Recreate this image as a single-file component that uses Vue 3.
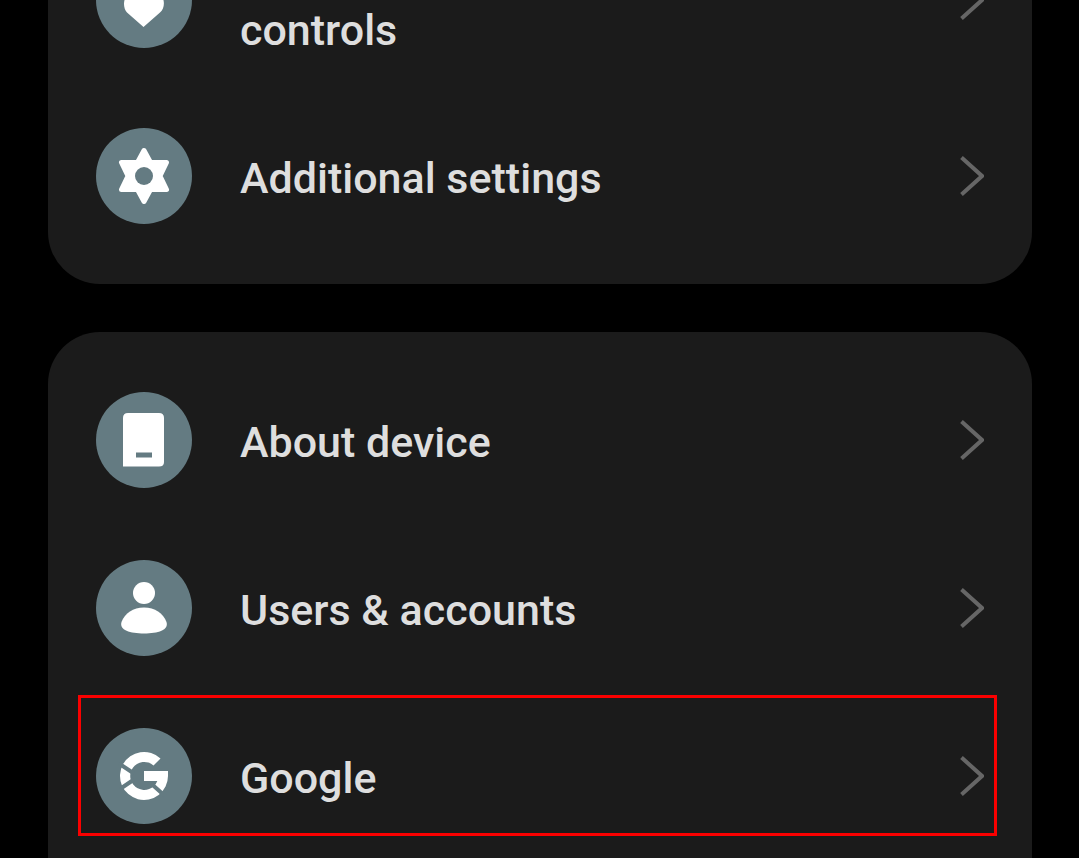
<script setup>
const groups = [
  [
    { label: 'controls', icon: 'heart', continued: true },
    { label: 'Additional settings', icon: 'gear' },
  ],
  [
    { label: 'About device', icon: 'device' },
    { label: 'Users & accounts', icon: 'user' },
    { label: 'Google', icon: 'google', marked: true },
  ],
]
</script>

<template>
  <main class="settings">
    <nav v-for="(group, i) in groups" :key="i" class="card">
      <a
        v-for="item in group"
        :key="item.label"
        href="#"
        class="row"
        :class="{ continued: item.continued, marked: item.marked }"
      >
        <svg class="icon" viewBox="0 0 96 96" aria-hidden="true">
          <circle class="disc" cx="48" cy="48" r="48" />
          <path
            v-if="item.icon === 'heart'"
            class="glyph"
            d="M47.500 75 L31 60.500 C27 56 27 48 31 43 C36 37 44 38 48 43 C52 38 60 37 65 43 C69 48 69 56 64 60.500 Z"
          />
          <template v-else-if="item.icon === 'gear'">
            <path
              class="glyph rounded"
              d="M48 22.500 L54.500 34.500 H70.500 L64 48 L70.500 61.500 H54.500 L48 73.500 L41.500 61.500 H25.500 L32 48 L25.500 34.500 H41.500 Z"
            />
            <circle class="disc" cx="48" cy="48" r="9" />
          </template>
          <template v-else-if="item.icon === 'device'">
            <path
              class="glyph"
              d="M32 21 H63 Q68 21 68 26 V70 Q68 74.500 63 74.500 H27 V26 Q27 21 32 21 Z"
            />
            <rect class="disc" x="40" y="60.500" width="16" height="5" />
          </template>
          <template v-else-if="item.icon === 'user'">
            <circle class="glyph" cx="48" cy="33" r="11" />
            <path
              class="glyph"
              d="M48 47.500 C59 47.500 67 53 70.500 62 C73 70 62 73.500 48 73.500 C34 73.500 23 70 25.500 62 C29 53 37 47.500 48 47.500 Z"
            />
          </template>
          <template v-else>
            <path
              class="glyph"
              d="M64.500 30.500 A24 24 0 1 0 72 48 V43 H48 V53 H61.300 A14 14 0 1 1 57.500 37.500 Z"
            />
            <path class="cut" d="M23 35.500 L38 45.500 M24 61 L38 51.500 M55 55.500 L69 68" />
          </template>
        </svg>
        <span class="label">{{ item.label }}</span>
        <svg class="chevron" viewBox="0 0 24 40" aria-hidden="true">
          <path d="M1.500 1.500 L22 20 L1.500 38.500" />
        </svg>
      </a>
    </nav>
  </main>
</template>

<style>
body {
  margin: 0;
  background: #000;
  overflow: hidden;
}
</style>

<style scoped>
.settings {
  display: flex;
  flex-direction: column;
  gap: 48px;
  height: 100vh;
  padding: 0 47px 0 48px;
  box-sizing: border-box;
  overflow: hidden;
  background: #000;
  font-family: Roboto, "Noto Sans", sans-serif;
}

.card {
  flex: none;
  padding: 24px 0;
  border-radius: 52px;
  background: #1b1b1b;
}

.card:first-child {
  margin-top: -116px;
}

.card:last-child {
  padding-bottom: 96px;
}

.row {
  position: relative;
  display: flex;
  align-items: center;
  gap: 48px;
  height: 168px;
  padding: 0 48px;
  box-sizing: border-box;
  color: #dedede;
  text-decoration: none;
}

.row.continued {
  height: 184px;
}

.row.continued .label {
  padding-top: 60px;
}

.row.marked::after {
  content: "";
  position: absolute;
  inset: 3px 35px 24px 30px;
  border: 3px solid #fa0000;
}

.icon {
  flex: none;
  width: 96px;
  height: 96px;
}

.label {
  flex: 1;
  padding-top: 4px;
  font-size: 43px;
  font-weight: 500;
  line-height: 52px;
}

.chevron {
  flex: none;
  width: 24px;
  height: 40px;
}

.disc {
  fill: #647b82;
}

.glyph {
  fill: #fff;
}

.rounded {
  stroke: #fff;
  stroke-width: 5;
  stroke-linejoin: round;
}

.cut {
  fill: none;
  stroke: #647b82;
  stroke-width: 4;
}

.chevron path {
  fill: none;
  stroke: #666;
  stroke-width: 4;
}
</style>
